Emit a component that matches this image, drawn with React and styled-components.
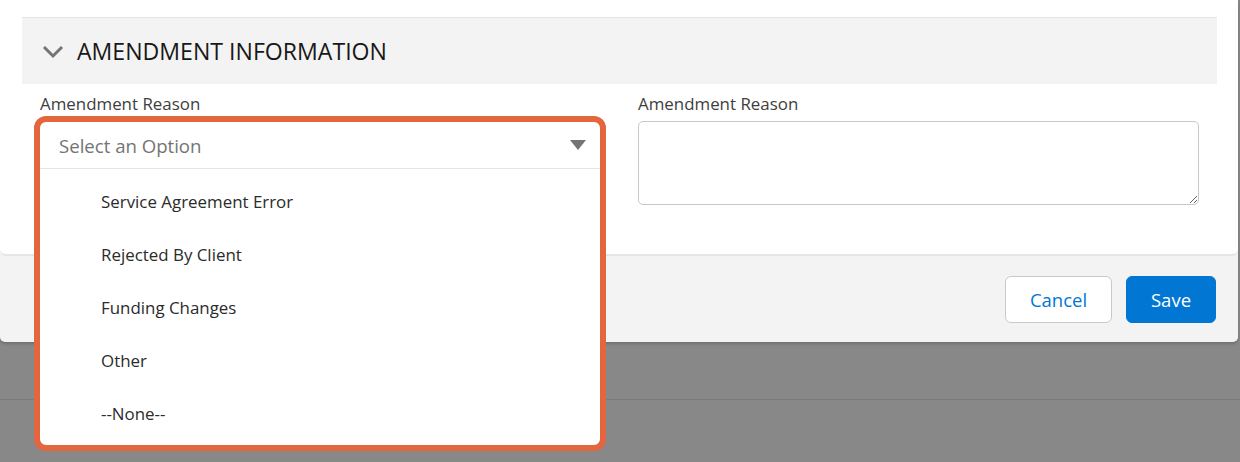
import React from 'react';
import styled, { createGlobalStyle } from 'styled-components';

const GlobalStyle = createGlobalStyle`
  html, body {
    margin: 0;
    padding: 0;
    background: #888888;
  }
  body {
    font-family: 'Open Sans', 'Noto Sans', sans-serif;
    width: 1240px;
    height: 462px;
    overflow: hidden;
  }
`;

const options = [
  'Service Agreement Error',
  'Rejected By Client',
  'Funding Changes',
  'Other',
  '--None--',
];

const App = () => {
  return (
    <>
      <GlobalStyle />
      <Page>
        <Modal>
          <ModalBody>
            <SectionHeader>
              <Chevron width="22" height="14" viewBox="0 0 22 14">
                <path d="M2 2 L11 11 L20 2" fill="none" stroke="#747474" strokeWidth="3" />
              </Chevron>
              <SectionTitle>AMENDMENT INFORMATION</SectionTitle>
            </SectionHeader>
            <FieldGrid>
              <Field>
                <FieldLabel>Amendment Reason</FieldLabel>
                <ComboWrap>
                  <Popup>
                    <Trigger>
                      <Placeholder>Select an Option</Placeholder>
                      <Caret width="16" height="10" viewBox="0 0 16 10">
                        <path d="M0 0 H16 L8 10 Z" fill="#747474" />
                      </Caret>
                    </Trigger>
                    <Listbox>
                      {options.map((opt) => (
                        <OptionItem key={opt}>{opt}</OptionItem>
                      ))}
                    </Listbox>
                  </Popup>
                </ComboWrap>
              </Field>
              <Field>
                <FieldLabel>Amendment Reason</FieldLabel>
                <TextArea />
              </Field>
            </FieldGrid>
          </ModalBody>
          <Footer>
            <Button width="107px">Cancel</Button>
            <Button primary width="90px">Save</Button>
          </Footer>
        </Modal>
        <Backdrop>
          <BackdropLine />
        </Backdrop>
      </Page>
    </>
  );
};

const Page = styled.div`
  display: flex;
  flex-direction: column;
  height: 462px;
`;

const Modal = styled.div`
  width: 1238px;
  background: #f3f3f3;
  border-radius: 0 0 5px 5px;
  box-shadow: 0 2px 3px rgba(0, 0, 0, 0.18);
  position: relative;
  z-index: 2;
`;

const ModalBody = styled.div`
  background: #ffffff;
  padding: 17px 21px 0 22px;
  height: 237px;
  border-radius: 0 0 6px 6px;
  border-bottom: 2px solid #e5e5e5;
`;

const SectionHeader = styled.div`
  display: flex;
  align-items: center;
  gap: 13px;
  height: 66px;
  padding-left: 20px;
  background: #f3f3f3;
  border-top: 1px solid #e5e5e5;
`;

const Chevron = styled.svg`
  display: block;
  margin-top: 2px;
`;

const SectionTitle = styled.span`
  font-size: 23.1px;
  color: #181818;
`;

const FieldGrid = styled.div`
  display: grid;
  grid-template-columns: 560px 561px;
  column-gap: 38px;
  padding: 0 18px;
`;

const Field = styled.div`
  display: flex;
  flex-direction: column;
`;

const FieldLabel = styled.label`
  font-size: 16.9px;
  color: #3e3e3c;
  line-height: 22px;
  padding: 9px 0 6px;
`;

const ComboWrap = styled.div`
  position: relative;
  height: 47px;
  margin-top: 1px;
`;

const Popup = styled.div`
  position: absolute;
  top: -6px;
  left: -6px;
  right: -6px;
  border: 6px solid #e4663f;
  border-radius: 12px;
  background: #ffffff;
  overflow: hidden;
  z-index: 10;
`;

const Trigger = styled.div`
  display: flex;
  align-items: center;
  justify-content: space-between;
  height: 46px;
  padding: 0 14px 0 19px;
  border-bottom: 1px solid #e5e5e5;
`;

const Placeholder = styled.span`
  font-size: 18.6px;
  color: #747474;
`;

const Caret = styled.svg`
  display: block;
`;

const Listbox = styled.ul`
  list-style: none;
  margin: 0;
  padding: 6px 0 5px;
`;

const OptionItem = styled.li`
  height: 53px;
  display: flex;
  align-items: center;
  padding-left: 61px;
  font-size: 16.9px;
  color: #2b2b2b;
`;

const TextArea = styled.textarea`
  box-sizing: border-box;
  width: 561px;
  height: 84px;
  border: 1px solid #c9c9c9;
  border-radius: 5px;
  resize: vertical;
  font-family: inherit;
  margin: 0;
`;

const Footer = styled.div`
  display: flex;
  justify-content: flex-end;
  align-items: center;
  gap: 14px;
  height: 86px;
  padding-right: 22px;
`;

const Button = styled.button`
  box-sizing: border-box;
  width: ${(p) => p.width};
  height: 47px;
  padding: 0;
  border-radius: 6px;
  font-family: inherit;
  font-size: 18.5px;
  border: 1px solid ${(p) => (p.primary ? '#0176d3' : '#c9c9c9')};
  background: ${(p) => (p.primary ? '#0176d3' : '#ffffff')};
  color: ${(p) => (p.primary ? '#ffffff' : '#0176d3')};
`;

const Backdrop = styled.div`
  flex: 1;
  background: #888888;
  padding-top: 57px;
`;

const BackdropLine = styled.div`
  height: 1px;
  background: #7b7b7b;
`;

export default App;
